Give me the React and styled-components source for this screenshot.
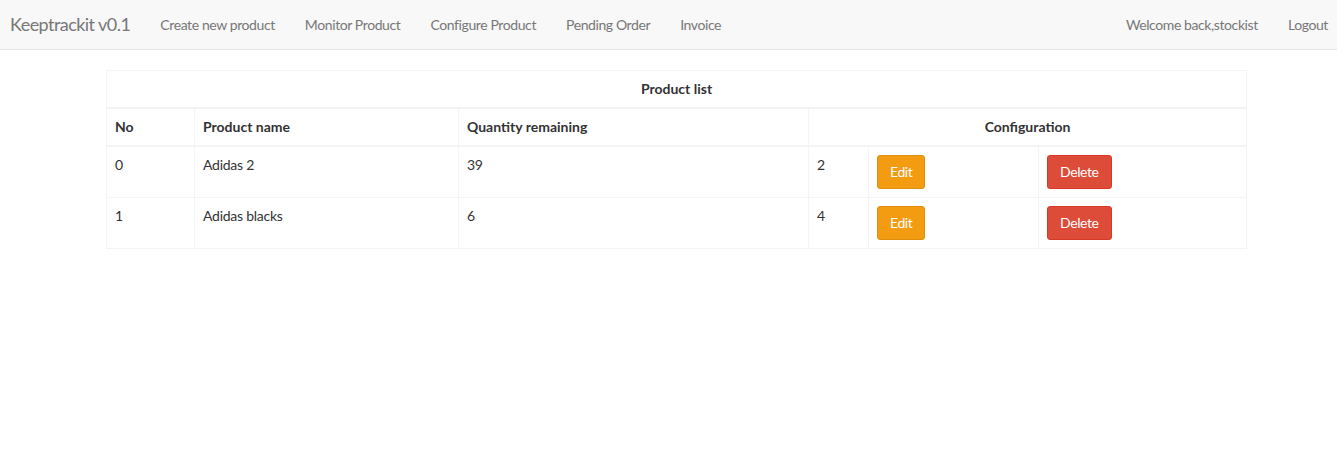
import React from 'react';
import styled, { createGlobalStyle } from 'styled-components';

const GlobalStyle = createGlobalStyle`
  body {
    margin: 0;
    background: #fff;
    font-family: Lato, "Open Sans", sans-serif;
    font-size: 14px;
    color: #333;
  }
`;

const Navbar = styled.nav`
  height: 49px;
  background-color: #f8f8f8;
  border-bottom: 1px solid #e7e7e7;
  display: flex;
  align-items: center;
  justify-content: space-between;
  overflow: hidden;
`;

const NavGroup = styled.div`
  display: flex;
  align-items: center;
  margin-right: ${({ right }) => (right ? '-6px' : '0')};
`;

const Brand = styled.a`
  color: #777;
  font-size: 18px;
  letter-spacing: -0.55px;
  padding: 0 15px 0 10px;
  line-height: 49px;
`;

const NavLink = styled.a`
  color: #777;
  font-size: 14px;
  letter-spacing: -0.4px;
  padding: 0 15px;
  line-height: 49px;
  cursor: pointer;
`;

const Content = styled.main`
  padding: 20px 91px 0 106px;
`;

const Table = styled.table`
  width: 1140px;
  border-collapse: collapse;
  table-layout: fixed;
  border: 1px solid #f4f4f4;
`;

const Th = styled.th`
  border: 1px solid #f4f4f4;
  border-bottom-width: 2px;
  padding: 8px;
  line-height: 20px;
  font-weight: 700;
  text-align: ${({ center }) => (center ? 'center' : 'left')};
`;

const Td = styled.td`
  border: 1px solid #f4f4f4;
  padding: 8px;
  line-height: 20px;
  letter-spacing: -0.25px;
  vertical-align: top;
`;

const Button = styled.button`
  font-family: inherit;
  font-size: 14px;
  letter-spacing: -0.4px;
  line-height: 20px;
  color: #fff;
  padding: 6px 12px;
  border-radius: 3px;
  border: 1px solid ${({ variant }) => (variant === 'danger' ? '#d73925' : '#e08e0b')};
  background-color: ${({ variant }) => (variant === 'danger' ? '#dd4b39' : '#f39c12')};
  cursor: pointer;
`;

const products = [
  { id: 0, name: 'Adidas 2', quantity: 39, config: 2 },
  { id: 1, name: 'Adidas blacks', quantity: 6, config: 4 },
];

const App = () => (
  <>
    <GlobalStyle />
    <Navbar>
      <NavGroup>
        <Brand>Keeptrackit v0.1</Brand>
        <NavLink>Create new product</NavLink>
        <NavLink>Monitor Product</NavLink>
        <NavLink>Configure Product</NavLink>
        <NavLink>Pending Order</NavLink>
        <NavLink>Invoice</NavLink>
      </NavGroup>
      <NavGroup right>
        <NavLink>Welcome back,stockist</NavLink>
        <NavLink>Logout</NavLink>
      </NavGroup>
    </Navbar>
    <Content>
      <Table>
        <colgroup>
          <col style={{ width: 88 }} />
          <col style={{ width: 264 }} />
          <col style={{ width: 350 }} />
          <col style={{ width: 60 }} />
          <col style={{ width: 170 }} />
          <col style={{ width: 208 }} />
        </colgroup>
        <thead>
          <tr>
            <Th center colSpan={6}>Product list</Th>
          </tr>
          <tr>
            <Th>No</Th>
            <Th>Product name</Th>
            <Th>Quantity remaining</Th>
            <Th center colSpan={3}>Configuration</Th>
          </tr>
        </thead>
        <tbody>
          {products.map((p) => (
            <tr key={p.id}>
              <Td>{p.id}</Td>
              <Td>{p.name}</Td>
              <Td>{p.quantity}</Td>
              <Td>{p.config}</Td>
              <Td><Button>Edit</Button></Td>
              <Td><Button variant="danger">Delete</Button></Td>
            </tr>
          ))}
        </tbody>
      </Table>
    </Content>
  </>
);

export default App;
